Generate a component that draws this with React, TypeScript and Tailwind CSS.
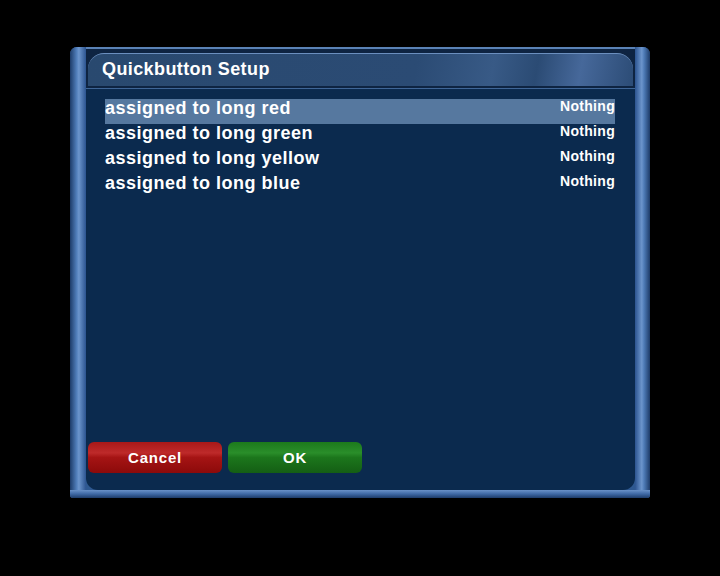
import React from 'react'

const rows = [
  { label: 'assigned to long red', value: 'Nothing' },
  { label: 'assigned to long green', value: 'Nothing' },
  { label: 'assigned to long yellow', value: 'Nothing' },
  { label: 'assigned to long blue', value: 'Nothing' },
]

export default function App() {
  const selected = 0

  return (
    <div className="w-[720px] h-[576px] bg-black pt-[47px] pl-[70px] font-['Liberation_Sans',Arial,sans-serif]">
      {/* outer frame */}
      <div className="w-[580px] h-[451px] flex flex-col rounded-t-[7px] rounded-b-[3px] bg-[#3a64a0]">
        <div className="flex h-[443px]">
          {/* left bar */}
          <div className="w-[16px] rounded-tl-[7px] bg-[linear-gradient(to_right,#1d3b68,#4f7cb8_40%,#6c95cc_55%,#2c5490)]" />

          {/* middle */}
          <div className="w-[549px] flex flex-col bg-[#2e5890]">
            {/* top strip */}
            <div className="h-[6px] bg-[#0e2442] border-t-[2px] border-[#5a82b6]" />

            {/* title bar */}
            <div className="h-[35px] bg-[#0e2442] px-[2px] pb-[2px]">
              <div className="h-full rounded-tl-[16px] rounded-tr-[16px] border-t border-[#6b8fbf] bg-[linear-gradient(100deg,#29496f_0%,#2b4b74_60%,#385a86_74%,#2b4b74_82%,#46689a_90%,#2c4c76_100%)] flex items-center pl-[14px]">
                <span className="text-white text-[18px] font-bold leading-none tracking-[0.4px] mb-[3px]">
                  Quickbutton Setup
                </span>
              </div>
            </div>

            {/* content */}
            <div className="flex-1 bg-[#0b2a4e] border-t border-[#3f6596] rounded-bl-[12px] rounded-br-[12px] flex flex-col">
              <div className="pt-[10px] pl-[19px] pr-[20px] flex-1">
                {rows.map((row, i) => (
                  <div
                    key={row.label}
                    className={`h-[25px] flex items-center justify-between ${i === selected ? 'bg-[#56789f]' : ''}`}
                  >
                    <span className="text-white text-[18px] font-bold leading-none tracking-[0.5px] mb-[8px]">{row.label}</span>
                    <span className="text-white text-[14px] font-bold leading-none tracking-[0.3px] mb-[11px]">{row.value}</span>
                  </div>
                ))}
              </div>

              {/* buttons */}
              <div className="flex gap-[6px] pl-[2px] pb-[17px]">
                <div className="w-[134px] h-[31px] rounded-[6px] bg-[linear-gradient(to_bottom,#a81818_0%,#be2a2a_35%,#a51414_50%,#8c0a0a_100%)] flex items-center justify-center">
                  <span className="text-white text-[15px] font-bold tracking-[0.8px] mt-[2px]">Cancel</span>
                </div>
                <div className="w-[134px] h-[31px] rounded-[6px] bg-[linear-gradient(to_bottom,#1c7a1c_0%,#2a8e2a_35%,#1c761c_50%,#145e14_100%)] flex items-center justify-center">
                  <span className="text-white text-[15px] font-bold tracking-[0.8px] mt-[2px]">OK</span>
                </div>
              </div>
            </div>
          </div>

          {/* right bar */}
          <div className="w-[15px] rounded-tr-[7px] bg-[linear-gradient(to_right,#2c5490,#6c95cc_45%,#4f7cb8_60%,#1d3b68)]" />
        </div>

        {/* bottom bar */}
        <div className="h-[8px] rounded-b-[3px] bg-[linear-gradient(to_bottom,#6a92c8,#3e68a4_50%,#1d3b68)]" />
      </div>
    </div>
  )
}
